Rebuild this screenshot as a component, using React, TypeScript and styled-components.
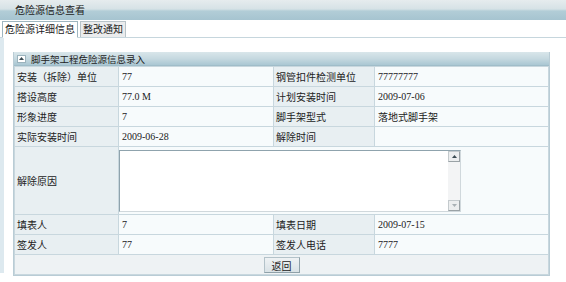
import React from "react";
import styled, { createGlobalStyle } from "styled-components";

const GlobalStyle = createGlobalStyle`
  body {
    margin: 0;
    background: #ffffff;
    font-family: "Liberation Serif", "Noto Sans CJK SC", serif;
    font-size: 10px;
    color: #222;
  }
`;

const Page = styled.div`
  width: 566px;
  height: 282px;
  overflow: hidden;
`;

const TitleBar = styled.div`
  height: 20px;
  line-height: 21px;
  padding-left: 15px;
  background: linear-gradient(#e6ecee 0%, #d6e2e6 45%, #b2cdd7 55%, #a6c4d0 100%);
  color: #222;
`;

const TabStrip = styled.div`
  display: flex;
  align-items: flex-end;
  height: 17px;
  padding-left: 2px;
  gap: 2px;
  border-bottom: 1px solid #c6d6dd;
`;

const Tab = styled.div<{ active?: boolean }>`
  height: ${p => (p.active ? 17 : 16)}px;
  line-height: 16px;
  padding: 0 2px;
  box-sizing: border-box;
  border: 1px solid ${p => (p.active ? "#9fb6c0" : "#b8c3c8")};
  border-bottom: ${p => (p.active ? "1px solid #ffffff" : "none")};
  margin-bottom: ${p => (p.active ? "-1px" : "0")};
  background: ${p => (p.active ? "#ffffff" : "#ebeced")};
`;

const Content = styled.div`
  height: 235px;
  border-left: 4px solid #dde9ef;
  padding: 14px 0 0 9px;
  box-sizing: border-box;
`;

const Panel = styled.div`
  width: 535px;
  border: 1px solid #b9ccd5;
  border-top: none;
`;

const PanelHeader = styled.div`
  display: flex;
  align-items: center;
  gap: 5px;
  height: 13px;
  padding-left: 3px;
  font-size: 9.5px;
  background: linear-gradient(#d9e6ea 0%, #c6d9e0 50%, #aac7d3 100%);
  border-bottom: 1px solid #a0bdc9;
`;

const ToggleIcon = styled.span`
  display: inline-flex;
  align-items: center;
  justify-content: center;
  width: 9px;
  height: 8px;
  background: #ffffff;
  border: 1px solid #9bb3bd;
  box-sizing: border-box;
`;

const Grid = styled.table`
  width: 100%;
  border-collapse: collapse;
  table-layout: fixed;
`;

const Label = styled.td<{ w?: number }>`
  box-sizing: border-box;
  width: ${p => (p.w ? `${p.w}px` : "auto")};
  height: 20px;
  padding: 0 0 0 2px;
  background: #e8eff2;
  border: 1px solid #c8d7de;
  white-space: nowrap;
`;

const Value = styled.td<{ w?: number }>`
  box-sizing: border-box;
  width: ${p => (p.w ? `${p.w}px` : "auto")};
  height: 20px;
  padding: 0 0 0 3px;
  background: #f7fbfc;
  border: 1px solid #c8d7de;
  white-space: nowrap;
`;

const Tall = styled.td`
  height: 65px;
  padding: 1px 0 1px 0;
  background: #f7fbfc;
  border: 1px solid #c8d7de;
`;

const TextBox = styled.div`
  display: flex;
  width: 342px;
  height: 62px;
  border: 1px solid #8fa3ad;
  border-right-color: #d0d8dc;
  border-bottom-color: #d0d8dc;
  box-sizing: border-box;
  background: #ffffff;
`;

const Area = styled.textarea`
  flex: 1;
  border: none;
  outline: none;
  resize: none;
  padding: 2px;
  font: inherit;
  background: transparent;
`;

const ScrollTrack = styled.div`
  width: 12px;
  display: flex;
  flex-direction: column;
  justify-content: space-between;
  background: #f3f4f5;
`;

const ScrollButton = styled.div`
  height: 11px;
  display: flex;
  align-items: center;
  justify-content: center;
  background: #eceeef;
  border: 1px solid #c4cacd;
  border-right-color: #9aa2a6;
  border-bottom-color: #9aa2a6;
  box-sizing: border-box;
`;

const ButtonRow = styled.td`
  height: 19px;
  text-align: center;
  background: #eef2f4;
  border: 1px solid #c8d7de;
  padding: 0;
`;

const BackButton = styled.button`
  width: 36px;
  height: 16px;
  padding: 0;
  font: inherit;
  color: #222;
  background: linear-gradient(#eef2f4, #d9e2e6);
  border: 1px solid #b3c2c9;
  border-right-color: #8fa1a9;
  border-bottom-color: #8fa1a9;
  vertical-align: middle;
`;

const Arrow = ({ up }: { up?: boolean }) => (
  <svg width="5" height="3" viewBox="0 0 5 3">
    <path d={up ? "M0 3 L2.5 0 L5 3 Z" : "M0 0 L2.5 3 L5 0 Z"} fill={up ? "#3a4a52" : "#a9b1b5"} />
  </svg>
);

const rows: Array<[string, string, string, string]> = [
  ["安装（拆除）单位", "77", "钢管扣件检测单位", "77777777"],
  ["搭设高度", "77.0 M", "计划安装时间", "2009-07-06"],
  ["形象进度", "7", "脚手架型式", "落地式脚手架"],
  ["实际安装时间", "2009-06-28", "解除时间", ""],
];

const tail: Array<[string, string, string, string]> = [
  ["填表人", "7", "填表日期", "2009-07-15"],
  ["签发人", "77", "签发人电话", "7777"],
];

export default function App() {
  return (
    <Page>
      <GlobalStyle />
      <TitleBar>危险源信息查看</TitleBar>
      <TabStrip>
        <Tab active>危险源详细信息</Tab>
        <Tab>整改通知</Tab>
      </TabStrip>
      <Content>
        <Panel>
          <PanelHeader>
            <ToggleIcon>
              <Arrow up />
            </ToggleIcon>
            脚手架工程危险源信息录入
          </PanelHeader>
          <Grid>
            <tbody>
              {rows.map((r, i) => (
                <tr key={i}>
                  <Label w={104}>{r[0]}</Label>
                  <Value w={155}>{r[1]}</Value>
                  <Label w={101}>{r[2]}</Label>
                  <Value>{r[3]}</Value>
                </tr>
              ))}
              <tr>
                <Label>解除原因</Label>
                <Tall colSpan={3}>
                  <TextBox>
                    <Area />
                    <ScrollTrack>
                      <ScrollButton>
                        <Arrow up />
                      </ScrollButton>
                      <ScrollButton>
                        <Arrow />
                      </ScrollButton>
                    </ScrollTrack>
                  </TextBox>
                </Tall>
              </tr>
              {tail.map((r, i) => (
                <tr key={i}>
                  <Label>{r[0]}</Label>
                  <Value>{r[1]}</Value>
                  <Label>{r[2]}</Label>
                  <Value>{r[3]}</Value>
                </tr>
              ))}
              <tr>
                <ButtonRow colSpan={4}>
                  <BackButton>返回</BackButton>
                </ButtonRow>
              </tr>
            </tbody>
          </Grid>
        </Panel>
      </Content>
    </Page>
  );
}
